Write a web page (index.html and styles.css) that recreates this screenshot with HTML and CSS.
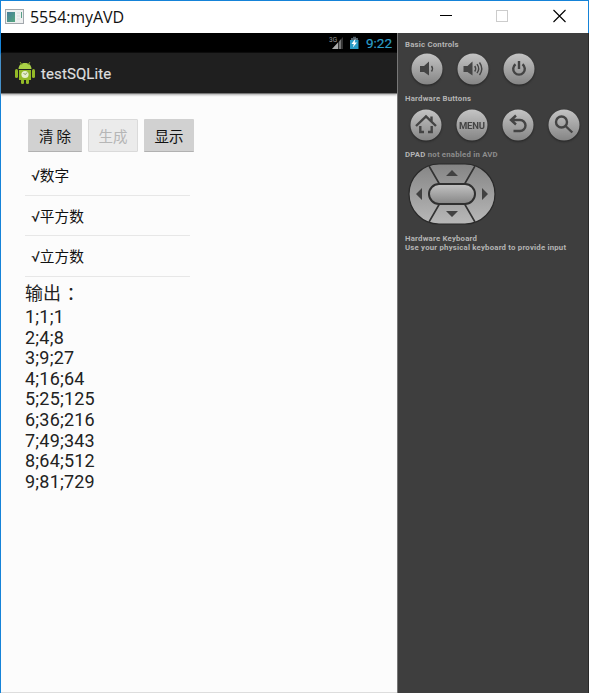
FILE: index.html
```
<!DOCTYPE html>
<html lang="zh-CN">
<head>
<meta charset="utf-8">
<title>5554:myAVD</title>
<link rel="stylesheet" href="styles.css">
</head>
<body>
<div class="window">
  <header class="titlebar">
    <svg class="app-icon" width="20" height="16" viewBox="0 0 20 16">
      <defs><linearGradient id="screen" x2="1" y2="1"><stop stop-color="#467e9b"/><stop offset="1" stop-color="#55a77e"/></linearGradient></defs>
      <rect x=".5" y=".5" width="18" height="14" fill="#eef0f0" stroke="#a2a8ad"/>
      <rect x="2" y="3" width="8" height="10" fill="url(#screen)"/>
      <path d="M12 4h3M12 7h3M12 10h3" stroke="#dadddd"/>
      <path d="M16.500 3v6" stroke="#57a087"/>
    </svg>
    <span class="window-title">5554:myAVD</span>
    <svg class="window-controls" width="130" height="14" viewBox="0 0 130 14">
      <path d="M0 6.500h12" stroke="#000"/>
      <rect x="56.500" y="1.500" width="11" height="11" fill="none" stroke="#ccc"/>
      <path d="M113.500 1l12 12m0-12l-12 12" stroke="#000" stroke-width="1.100"/>
    </svg>
  </header>
  <div class="emulator">
    <main class="phone">
      <div class="status">
        <svg width="32" height="14" viewBox="0 0 32 14">
          <text x="0" y="6" class="network">3G</text>
          <path d="M3 13L14 1v12z" fill="#343434"/>
          <path d="M3 13L9 6.500V13z" fill="#aaa"/>
          <path d="M10 5.500L12 3.300V13h-2z" fill="#777"/>
          <path d="M22 2h2V.7h3V2h2v11h-7z" fill="#526069"/>
          <path d="M21 4h8.500v9H21z" fill="#299bc5"/>
          <path d="M26.500 2.500L22.500 8h2.300l-1 3.500L28 6.500h-2.300z" fill="#fff"/>
        </svg>
        <span class="clock">9:22</span>
      </div>
      <div class="actionbar">
        <svg width="20" height="23" viewBox="0 0 20 23">
          <g fill="#94ba27">
            <path d="M3.500 7C3.800 3 6 1 10 1s6.200 2 6.500 6z" fill="#aad246"/>
            <path d="M5 0l2 3M15 0l-2 3" stroke="#83a623"/>
            <path d="M4 8h12v10H4z"/>
            <rect x="0" y="7" width="3" height="9" rx="1.500"/>
            <rect x="17" y="7" width="3" height="9" rx="1.500"/>
            <rect x="6" y="17" width="3" height="5" rx="1.200"/>
            <rect x="11" y="17" width="3" height="5" rx="1.200"/>
          </g>
          <circle cx="10" cy="12.500" r="3.600" fill="#e6eecb"/>
          <path d="M8.500 11l1.700 1.700L12 10.500" fill="none" stroke="#84995a"/>
        </svg>
        <span class="app-name">testSQLite</span>
      </div>
      <section class="content">
        <div class="buttons">
          <button class="btn wide">清 除</button>
          <button class="btn" disabled>生成</button>
          <button class="btn">显示</button>
        </div>
        <ul class="list">
          <li>√数字</li>
          <li>√平方数</li>
          <li>√立方数</li>
        </ul>
        <h2 class="output-title">输出<span class="colon" lang="zh-TW">：</span></h2>
        <div class="output">1;1;1<br>2;4;8<br>3;9;27<br>4;16;64<br>5;25;125<br>6;36;216<br>7;49;343<br>8;64;512<br>9;81;729</div>
      </section>
    </main>
    <aside class="controls">
      <svg class="defs" width="0" height="0">
        <defs>
          <linearGradient id="metal" x2="0" y2="1"><stop stop-color="#c4c4c4"/><stop offset="1" stop-color="#858585"/></linearGradient>
          <linearGradient id="pad" x2="0" y2="1"><stop stop-color="#858585"/><stop offset="1" stop-color="#b8b8b8"/></linearGradient>
        </defs>
      </svg>
      <p class="label">Basic Controls</p>
      <div class="keys basic">
        <svg class="key" viewBox="0 0 32 32"><circle cx="16" cy="16" r="15.500"/>
          <path class="solid" d="M9 13h4l5-4.500v14L13 19H9z"/><path class="thin" d="M20.500 13q2 2.500 0 5.500"/></svg>
        <svg class="key" viewBox="0 0 32 32"><circle cx="16" cy="16" r="15.500"/>
          <path class="solid" d="M6.500 13h4l5-4.500v14L10.500 19h-4z"/><path class="thin" d="M17.700 13q2 2.700 0 5.500M20 11.200q3.300 4.500 0 9M22.500 9.500q4.500 6.200 0 12.500"/></svg>
        <svg class="key" viewBox="0 0 32 32"><circle cx="16" cy="16" r="15.500"/>
          <path class="stroke" d="M12.500 11.200a5.800 5.800 0 1 0 7 0M16 8v8"/></svg>
      </div>
      <p class="label">Hardware Buttons</p>
      <div class="keys hardware">
        <svg class="key" viewBox="0 0 32 32"><circle cx="16" cy="16" r="15.500"/>
          <path class="stroke" d="M6 17L16 7.300 26 17M21.500 12.500V7.500M14 23h-3.700v-6M18 23h3.700v-6"/></svg>
        <svg class="key" viewBox="0 0 32 32"><circle cx="16" cy="16" r="15.500"/>
          <text x="16" y="19.600" class="menu" textLength="26">MENU</text></svg>
        <svg class="key" viewBox="0 0 32 32"><circle cx="16" cy="16" r="15.500"/>
          <path class="stroke" d="M14 6.500l-5 4.500 5 4.500M9.500 11h8.500a5.500 5.500 0 0 1 0 11h-6.500"/></svg>
        <svg class="key" viewBox="0 0 32 32"><circle cx="16" cy="16" r="15.500"/>
          <circle class="stroke" cx="13.500" cy="13" r="5.500"/><path class="stroke" d="M17.500 17l6.800 6.500"/></svg>
      </div>
      <p class="label">DPAD <span class="muted">not enabled in AVD</span></p>
      <svg class="dpad" width="88" height="62" viewBox="0 0 88 62">
        <rect x="1" y="1" width="86" height="60" rx="30" fill="url(#pad)" stroke="#292929" stroke-width="1.200"/>
        <path d="M21 3l11 19M67 3L56 22M21 59l11-19M67 59L56 40" stroke="#333" stroke-width="1.600"/>
        <rect x="21" y="21" width="46" height="20" rx="10" fill="url(#metal)" stroke="#303030" stroke-width="2"/>
        <path d="M44 7l6 6H38zM44 54l6-6H38zM8 31l6-6v12zM80 31l-6-6v12z" fill="#414141"/>
      </svg>
      <p class="label keyboard">Hardware Keyboard<br>Use your physical keyboard to provide input</p>
    </aside>
  </div>
</div>
</body>
</html>
```

FILE: styles.css
```
* { box-sizing: border-box; }
body { margin: 0; background: #fff; overflow: hidden; font-family: Roboto, "Noto Sans CJK SC", sans-serif; }
.window { width: 589px; height: 693px; display: flex; flex-direction: column; border-left: 1px solid #1583d8; }
.titlebar { height: 33px; flex: none; display: flex; align-items: center; padding: 0 22px 0 4px; border-top: 1px solid #1583d8; border-right: 1px solid #1583d8; }
.window-title { margin-left: 5px; font: 16px/24px "Open Sans", sans-serif; color: #111; letter-spacing: -.1px; }
.window-controls { margin: -2px -4px 0 auto; }
.emulator { flex: 1; display: flex; }
.phone { width: 396px; display: flex; flex-direction: column; background: #fcfcfc; border-bottom: 1px solid #ddd; }
.status { height: 20px; background: #000; display: flex; justify-content: flex-end; align-items: center; padding-right: 5px; gap: 5px; }
.network { font: 6.500px Roboto, sans-serif; fill: #999; }
.clock { width: 26px; font-size: 13.500px; line-height: 20px; color: #2c9fc9; white-space: nowrap; -webkit-text-stroke: .2px; }
.actionbar { height: 41px; background: #1f1f1f; border-bottom: 1px solid #777; box-shadow: 0 1px 2px #aaa; display: flex; align-items: center; gap: 6px; padding-left: 14px; color: #dedede; font-size: 15px; }
.app-name { padding-top: 2px; letter-spacing: .1px; -webkit-text-stroke: .2px; }
.content { padding: 25px 24px 0; }
.buttons { display: flex; gap: 6px; padding-left: 3px; height: 33px; }
.btn { width: 50px; height: 33px; padding: 0; border: 0; border-bottom: 1px solid #b1b1b1; border-radius: 1px; background: #d1d1d1; color: #111; font: 14.500px "Noto Sans CJK SC", sans-serif; white-space: nowrap; }
.btn.wide { width: 54px; }
.btn:disabled { background: #ebebeb; border: 1px solid #dadada; color: #b6b6b6; }
.list { width: 165px; margin: 3px 0 0; padding: 0; list-style: none; }
.list li { height: 40.500px; padding-left: 6px; border-bottom: 1px solid #e7e7e7; font-size: 14.700px; line-height: 43px; color: #111; }
.output-title { margin: 2px 0 0; font-size: 18px; line-height: 27px; font-weight: 400; color: #222; }
.colon { position: relative; left: 1px; top: 1px; font-family: "Noto Sans CJK TC", sans-serif; }
.output { padding-top: .5px; font-size: 18px; line-height: 20.600px; color: #222; letter-spacing: .2px; }
.controls { width: 192px; padding: 7px 0 0 7px; background: #3e3e3e; border-left: 1px solid #777; border-right: 1px solid #292929; }
.defs { display: block; }
.label { margin: 0; font-size: 7.800px; line-height: 10px; font-weight: 700; letter-spacing: .2px; color: #b4b4b4; white-space: nowrap; }
.muted { color: #8c8c8c; }
.keys { display: flex; gap: 14px; }
.basic { height: 44px; padding: 3px 0 0 6px; }
.hardware { height: 46px; padding: 5px 0 0 5px; }
.key { width: 32px; height: 32px; flex: none; filter: drop-shadow(0 1px 1px #222); }
.key > circle:first-child { fill: url(#metal); }
.solid { fill: #444; }
.thin { fill: none; stroke: #444; stroke-width: 1.400; }
.key .stroke { fill: none; stroke: #444; stroke-width: 2.400; }
.menu { font: 700 9.500px Roboto, sans-serif; text-anchor: middle; fill: #444; }
.dpad { display: block; margin: 3px 0 0 3px; }
.keyboard { margin-top: 9px; line-height: 9px; }
```
